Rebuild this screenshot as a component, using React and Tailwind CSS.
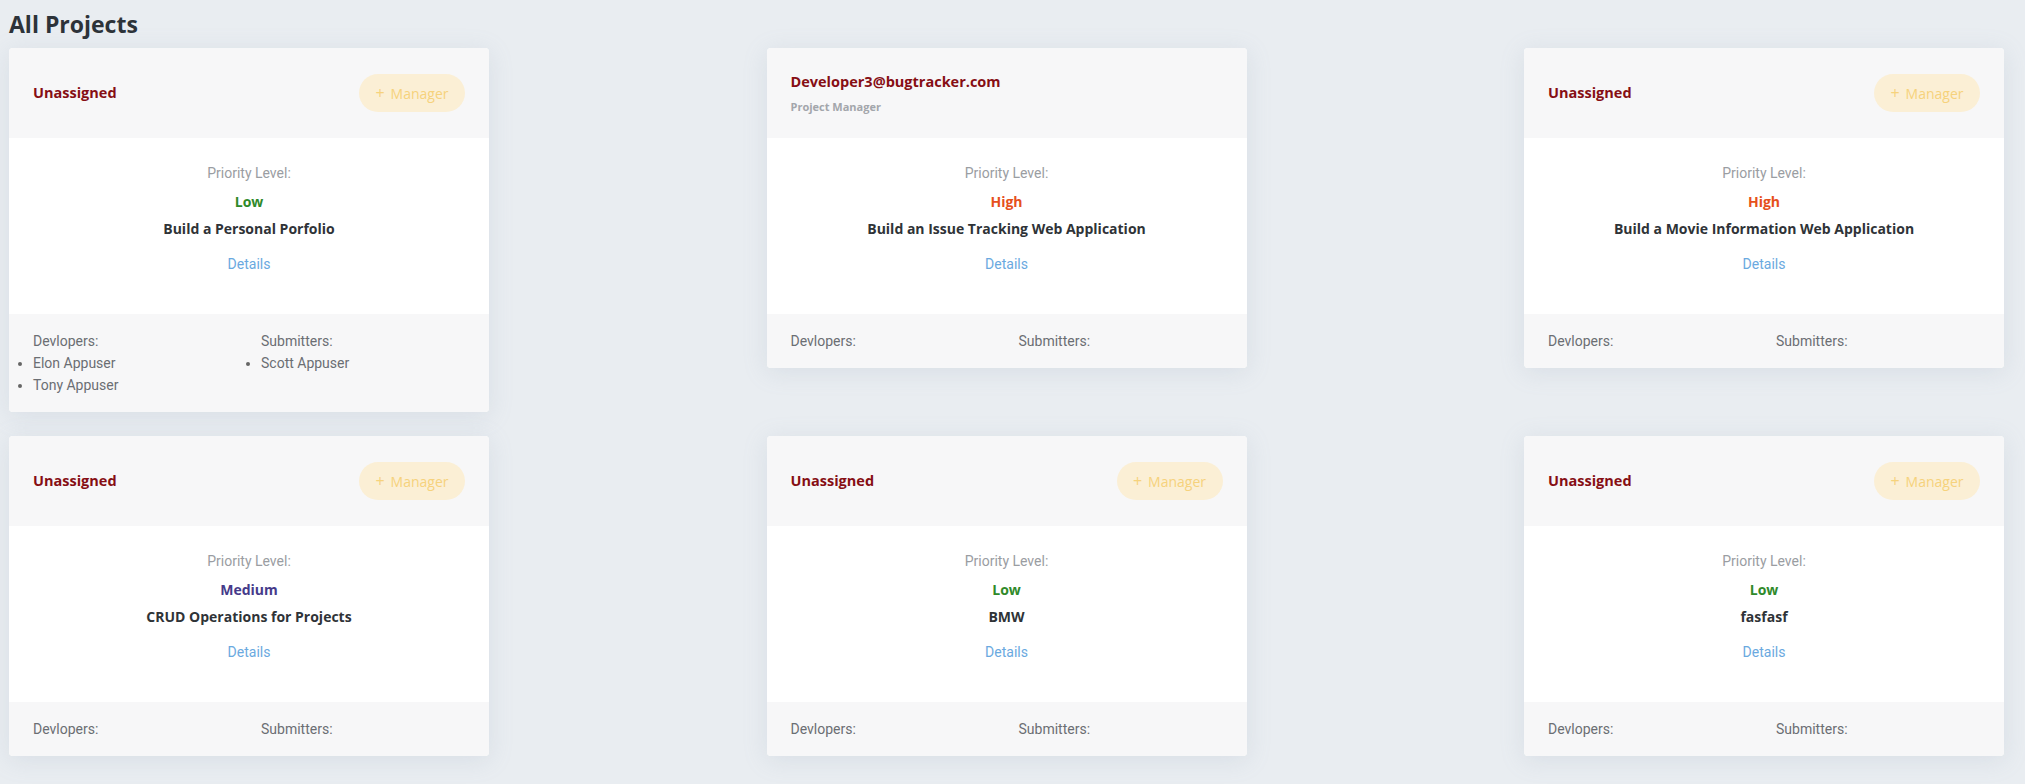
import React from 'react';

const heading = "font-['Open_Sans','Liberation_Sans',sans-serif]";
const body = "font-['Roboto','Liberation_Sans',sans-serif]";

const proyectos = [
  { id: 1, manager: null, prioridad: 'Low', titulo: 'Build a Personal Porfolio', devs: ['Elon Appuser', 'Tony Appuser'], subs: ['Scott Appuser'] },
  { id: 2, manager: 'Developer3@bugtracker.com', prioridad: 'High', titulo: 'Build an Issue Tracking Web Application', devs: [], subs: [] },
  { id: 3, manager: null, prioridad: 'High', titulo: 'Build a Movie Information Web Application', devs: [], subs: [] },
  { id: 4, manager: null, prioridad: 'Medium', titulo: 'CRUD Operations for Projects', devs: [], subs: [] },
  { id: 5, manager: null, prioridad: 'Low', titulo: 'BMW', devs: [], subs: [] },
  { id: 6, manager: null, prioridad: 'Low', titulo: 'fasfasf', devs: [], subs: [] },
];

const colorPrioridad = {
  Low: 'text-[#2f8a2a]',
  High: 'text-[#e6501c]',
  Medium: 'text-[#453a8a]',
};

const Lista = ({ nombres }) => (
  <ul className="list-disc list-outside m-0 p-0 marker:text-[#666]">
    {nombres.map((n) => (
      <li key={n} className="leading-[22px]">{n}</li>
    ))}
  </ul>
);

const TarjetaProyecto = ({ p }) => (
  <div className="w-[480px] rounded-[4px] overflow-hidden bg-white shadow-[0_4px_24px_rgba(140,155,175,0.18)]">
    {/* Cabecera */}
    <div className="h-[90px] bg-[#f7f7f8] px-6 flex items-center justify-between">
      {p.manager ? (
        <div className="flex flex-col">
          <span className={`${heading} text-[14.5px] font-bold leading-[20px] text-[#860e14]`}>{p.manager}</span>
          <span className={`${heading} text-[11px] font-bold leading-[16px] mt-[7px] text-[#a3a6ab]`}>Project Manager</span>
        </div>
      ) : (
        <>
          <span className={`${heading} text-[14.5px] font-bold text-[#860e14]`}>Unassigned</span>
          <button className={`${heading} h-[38px] w-[106px] rounded-full bg-[#fbefd5] text-[#f6d27c] text-[14px] flex items-center justify-center gap-[6px]`}>
            <span className="text-[16px] leading-none">+</span> Manager
          </button>
        </>
      )}
    </div>

    {/* Cuerpo */}
    <div className={`h-[176px] bg-white pt-6 text-center ${body}`}>
      <p className="text-[14px] leading-[22px] text-[#9a9da2]">Priority Level:</p>
      <p className={`${heading} mt-[7px] text-[14px] font-bold leading-[22px] ${colorPrioridad[p.prioridad]}`}>{p.prioridad}</p>
      <p className={`${heading} mt-[5px] text-[14px] font-bold leading-[22px] text-[#2f3337]`}>{p.titulo}</p>
      <a href="#" className="block mt-[13px] text-[14px] leading-[22px] text-[#6aa9e0]">Details</a>
    </div>

    {/* Pie */}
    <div className={`bg-[#f7f7f8] px-6 py-4 grid grid-cols-[228px_1fr] text-[14px] text-[#6b6e73] ${body}`}>
      <div>
        <p className="leading-[22px]">Devlopers:</p>
        <Lista nombres={p.devs} />
      </div>
      <div>
        <p className="leading-[22px]">Submitters:</p>
        <Lista nombres={p.subs} />
      </div>
    </div>
  </div>
);

export default function App() {
  return (
    <div className="min-h-screen bg-[#e9edf1] pl-[9px] pr-[21px] pb-6">
      <h1 className={`${heading} text-[23px] font-bold text-[#2d3339] leading-[48px]`}>All Projects</h1>
      <div className="grid grid-cols-[480px_480px_480px] justify-between items-start gap-y-6">
        {proyectos.map((p) => (
          <TarjetaProyecto key={p.id} p={p} />
        ))}
      </div>
    </div>
  );
}
